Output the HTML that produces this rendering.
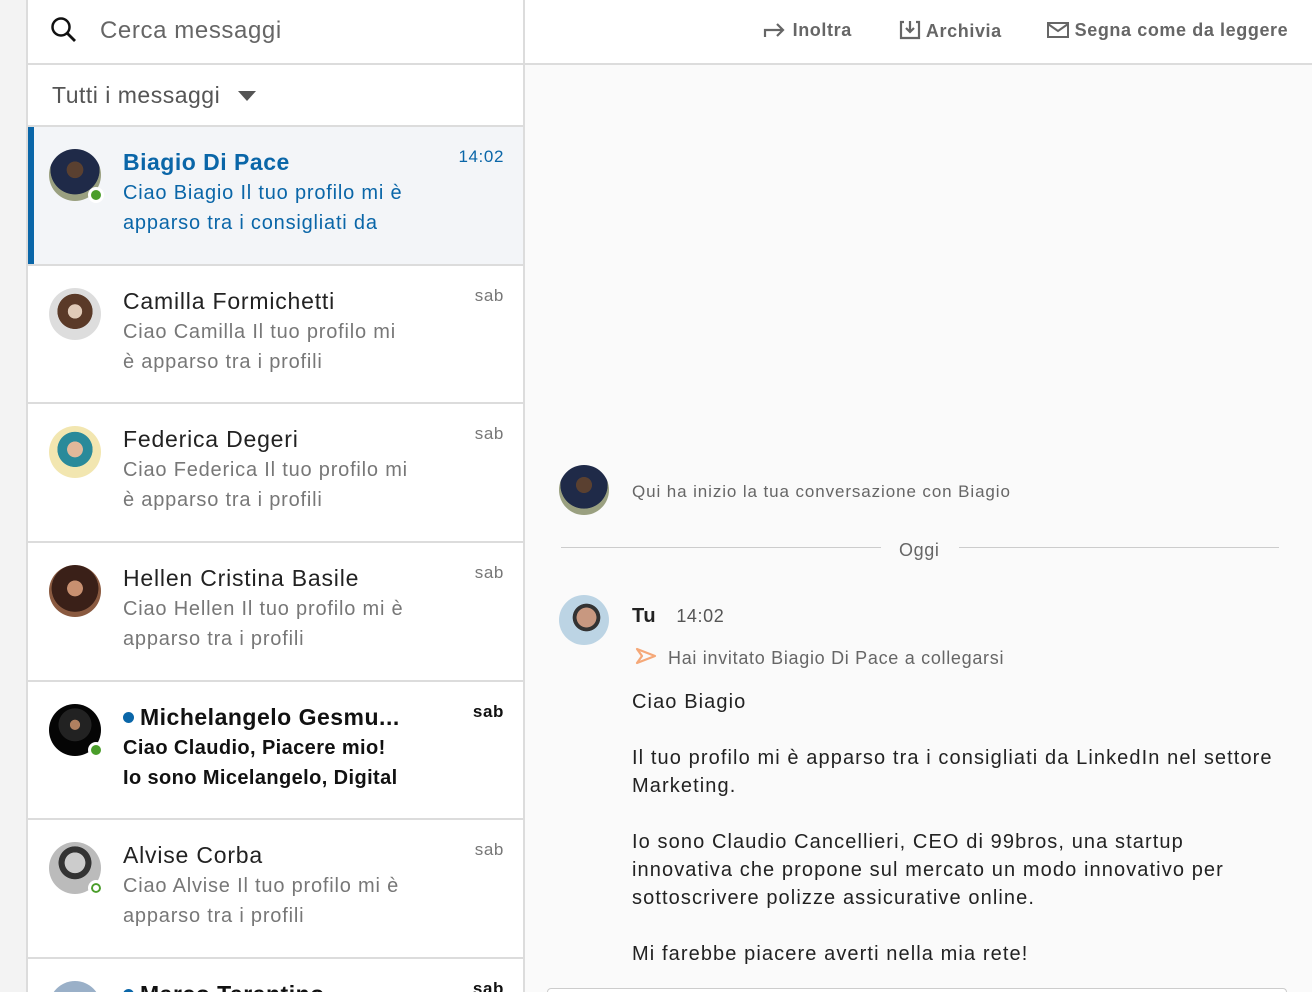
<!DOCTYPE html>
<html style="width:1312px;height:992px;overflow:hidden"><head><meta charset="utf-8"><style>
*{margin:0;padding:0;box-sizing:border-box}
body{width:1312px;height:992px;overflow:hidden;background:#f3f3f3;font-family:"Liberation Sans",sans-serif;position:relative}
.left{position:absolute;left:26px;top:0;width:499px;height:992px;overflow:hidden;background:#fff;border-left:2px solid #dcdcdc;border-right:2px solid #dcdcdc}
.search{height:65px;border-bottom:2px solid #dcdcdc;position:relative}
.search span{position:absolute;left:72px;top:17px;font-size:24px;color:#666;letter-spacing:0.6px}
.filter{height:62px;border-bottom:2px solid #dcdcdc;position:relative}
.filter span{position:absolute;left:24px;top:17px;font-size:23px;color:#555;letter-spacing:0.5px}
.row{height:138.7px;border-bottom:2px solid #dcdcdc;position:relative;overflow:hidden}
.row.last{height:33px;border-bottom:none}
.row.sel{background:#f3f5f8}
.row.sel:before{content:"";position:absolute;left:0;top:0;bottom:0;width:6px;background:#0a66a8}
.av{position:absolute;left:21px;top:22px;width:52px;height:52px;border-radius:50%;background:#888}
.dot{position:absolute;left:60px;top:60px;width:16px;height:16px;border-radius:50%;background:#4a9d2a;border:3px solid #fff}
.dot.o{background:#fff;box-shadow:inset 0 0 0 2px #4a9d2a}
.nm{position:absolute;left:95px;top:22px;font-size:23px;color:#222;white-space:nowrap;letter-spacing:0.8px}
.tx{position:absolute;left:95px;top:51px;font-size:20px;line-height:30px;color:#777;white-space:nowrap;letter-spacing:0.8px}
.tm{position:absolute;right:19px;top:20px;font-size:17px;color:#777;letter-spacing:0.6px}
.b .nm,.b .tx,.b .tm{color:#111;font-weight:bold}
.b .nm{letter-spacing:0.5px}.b .tx{letter-spacing:0.4px}
.bd{display:inline-block;width:11px;height:11px;border-radius:50%;background:#0a66a8;margin-right:6px;vertical-align:2px}
.right{position:absolute;left:525px;top:0;width:787px;height:992px;overflow:hidden;background:#fafafa}
.hdr{height:65px;background:#fff;border-bottom:2px solid #dcdcdc;position:relative;font-size:18px;color:#666;font-weight:bold;letter-spacing:0.6px}
.hdr div{position:absolute;top:20px;white-space:nowrap}
.msg{position:absolute;font-size:20px;color:#222;line-height:28px;letter-spacing:1.1px;white-space:nowrap}
</style></head><body>
<div class="left">
 <div class="search">
  <svg style="position:absolute;left:22px;top:16px" width="28" height="28" viewBox="0 0 28 28"><circle cx="11" cy="11" r="8.5" fill="none" stroke="#111" stroke-width="2.5"/><path d="M17 17l8 8" stroke="#111" stroke-width="2.8"/></svg>
  <span>Cerca messaggi</span></div>
 <div class="filter"><span>Tutti i messaggi</span>
  <svg style="position:absolute;left:210px;top:26px" width="18" height="10"><path d="M0 0h18L9 10z" fill="#555"/></svg></div>
 <div class="row sel"><div class="av" style="background:radial-gradient(circle at 50% 40%,#5a4030 0 20%,#1f2a48 21% 60%,#9aa080 61%)"></div><div class="dot"></div>
  <div class="nm" style="color:#0a66a8;font-weight:bold;letter-spacing:0.5px">Biagio Di Pace</div>
  <div class="tx" style="color:#0a66a8">Ciao Biagio Il tuo profilo mi è<br>apparso tra i consigliati da</div>
  <div class="tm" style="color:#0a66a8">14:02</div></div>
 <div class="row"><div class="av" style="background:radial-gradient(circle at 50% 45%,#e0cbb8 0 18%,#5a3a28 19% 45%,#ddd 46%)"></div>
  <div class="nm">Camilla Formichetti</div><div class="tx">Ciao Camilla Il tuo profilo mi<br>è apparso tra i profili</div><div class="tm">sab</div></div>
 <div class="row"><div class="av" style="background:radial-gradient(circle at 50% 45%,#e2b89a 0 20%,#2a8a9a 21% 45%,#f2e6b0 46%)"></div>
  <div class="nm">Federica Degeri</div><div class="tx">Ciao Federica Il tuo profilo mi<br>è apparso tra i profili</div><div class="tm">sab</div></div>
 <div class="row"><div class="av" style="background:radial-gradient(circle at 50% 45%,#c89070 0 20%,#3a2018 21% 60%,#8a5a40 61%)"></div>
  <div class="nm">Hellen Cristina Basile</div><div class="tx">Ciao Hellen Il tuo profilo mi è<br>apparso tra i profili</div><div class="tm">sab</div></div>
 <div class="row b"><div class="av" style="background:radial-gradient(circle at 50% 40%,#b08060 0 12%,#222 13% 40%,#050505 41%)"></div><div class="dot"></div>
  <div class="nm"><span class="bd"></span>Michelangelo Gesmu...</div><div class="tx">Ciao Claudio, Piacere mio!<br>Io sono Micelangelo, Digital</div><div class="tm">sab</div></div>
 <div class="row"><div class="av" style="background:radial-gradient(circle at 50% 40%,#ccc 0 25%,#333 26% 40%,#bbb 41%)"></div><div class="dot o"></div>
  <div class="nm">Alvise Corba</div><div class="tx">Ciao Alvise Il tuo profilo mi è<br>apparso tra i profili</div><div class="tm">sab</div></div>
 <div class="row b last"><div class="av" style="background:#9ab0c8"></div>
  <div class="nm"><span class="bd"></span>Marco Tarantino</div><div class="tm">sab</div></div>
</div>
<div class="right">
 <div class="hdr">
  <div style="left:238px"><svg width="24" height="18" viewBox="0 0 24 18" style="vertical-align:-2px"><path d="M2 17V10h17M14 4l6 6-6 6" fill="none" stroke="#666" stroke-width="2.2"/></svg> Inoltra</div>
  <div style="left:374px"><svg width="22" height="20" viewBox="0 0 22 20" style="vertical-align:-3px"><path d="M5 2H2v16h18V2h-3M11 1v11M7 8l4 4 4-4" fill="none" stroke="#666" stroke-width="2.2"/></svg> Archivia</div>
  <div style="left:522px"><svg width="22" height="16" viewBox="0 0 22 16" style="vertical-align:-2px"><rect x="1" y="1" width="20" height="14" fill="none" stroke="#666" stroke-width="2"/><path d="M1 2l10 7 10-7" fill="none" stroke="#666" stroke-width="2"/></svg> Segna come da leggere</div>
 </div>
 <div style="position:absolute;left:34px;top:465px;width:50px;height:50px;border-radius:50%;background:radial-gradient(circle at 50% 40%,#5a4030 0 20%,#1f2a48 21% 60%,#9aa080 61%)"></div>
 <div class="msg" style="left:107px;top:478px;font-size:17px;color:#666;letter-spacing:0.9px">Qui ha inizio la tua conversazione con Biagio</div>
 <div style="position:absolute;left:36px;top:547px;width:320px;height:1px;background:#ccc"></div>
 <div style="position:absolute;left:434px;top:547px;width:320px;height:1px;background:#ccc"></div>
 <div class="msg" style="left:374px;top:536px;font-size:18px;color:#666;letter-spacing:0.6px">Oggi</div>
 <div style="position:absolute;left:34px;top:595px;width:50px;height:50px;border-radius:50%;background:radial-gradient(circle at 55% 45%,#c89880 0 25%,#333 26% 35%,#bcd4e4 36%)"></div>
 <div class="msg" style="left:107px;top:602px;font-weight:bold;letter-spacing:0.6px">Tu <span style="font-weight:normal;font-size:18px;color:#555;margin-left:14px">14:02</span></div>
 <svg style="position:absolute;left:110px;top:647px" width="22" height="18" viewBox="0 0 22 18"><path d="M2 2l18 7-18 7 5-7z" fill="none" stroke="#f5a878" stroke-width="2.2" stroke-linejoin="round"/></svg>
 <div class="msg" style="left:143px;top:644px;font-size:18px;color:#666;letter-spacing:0.7px">Hai invitato Biagio Di Pace a collegarsi</div>
 <div class="msg" style="left:107px;top:688px">Ciao Biagio<br><br>Il tuo profilo mi è apparso tra i consigliati da LinkedIn nel settore<br>Marketing.<br><br>Io sono Claudio Cancellieri, CEO di 99bros, una startup<br>innovativa che propone sul mercato un modo innovativo per<br>sottoscrivere polizze assicurative online.<br><br>Mi farebbe piacere averti nella mia rete!</div>
 <div style="position:absolute;left:22px;top:988px;width:740px;height:4px;border:1px solid #ccc;border-bottom:none;border-radius:8px 8px 0 0;background:#fff"></div>
</div>
</body></html>
